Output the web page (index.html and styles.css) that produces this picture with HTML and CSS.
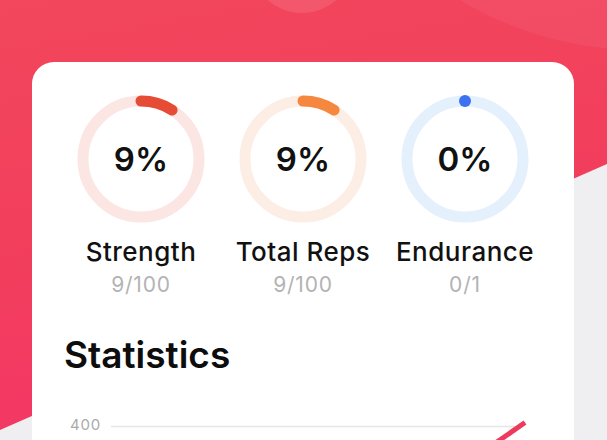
FILE: index.html
```html
<!DOCTYPE html>
<html lang="en">

<head>
    <meta charset="UTF-8">
    <meta name="viewport" content="width=device-width, initial-scale=1.0">
    <title>Progress</title>
    <link rel="stylesheet" href="styles.css">
</head>

<body>
    <div class="backdrop">
        <div class="bubble bubble-small"></div>
        <div class="bubble bubble-big"></div>
    </div>

    <div class="card">
        <div class="rings">
            <div class="ring-item">
                <div class="ring">
                    <svg viewBox="0 0 128 128" width="128" height="128">
                        <circle class="track strength-track" cx="64" cy="64" r="58"></circle>
                        <circle class="arc strength-arc" cx="64" cy="64" r="58" stroke-dasharray="32.8 400"></circle>
                    </svg>
                    <div class="percent">9%</div>
                </div>
                <div class="ring-label">Strength</div>
                <div class="ring-value">9/100</div>
            </div>

            <div class="ring-item">
                <div class="ring">
                    <svg viewBox="0 0 128 128" width="128" height="128">
                        <circle class="track reps-track" cx="64" cy="64" r="58"></circle>
                        <circle class="arc reps-arc" cx="64" cy="64" r="58" stroke-dasharray="32.8 400"></circle>
                    </svg>
                    <div class="percent">9%</div>
                </div>
                <div class="ring-label">Total Reps</div>
                <div class="ring-value">9/100</div>
            </div>

            <div class="ring-item">
                <div class="ring">
                    <svg viewBox="0 0 128 128" width="128" height="128">
                        <circle class="track endurance-track" cx="64" cy="64" r="58"></circle>
                        <circle class="arc endurance-arc" cx="64" cy="64" r="58" stroke-dasharray="0 400"></circle>
                    </svg>
                    <div class="percent">0%</div>
                </div>
                <div class="ring-label">Endurance</div>
                <div class="ring-value">0/1</div>
            </div>
        </div>

        <div class="stats">
            <h2 class="section-title">Statistics</h2>

            <div class="chart">
                <span class="axis-label">400</span>
                <svg class="chart-line" viewBox="0 0 420 30" width="420" height="30">
                    <line x1="0" y1="11.5" x2="404" y2="11.5" class="grid"></line>
                    <polyline points="414,7.5 381,30.5" class="series"></polyline>
                </svg>
            </div>
        </div>
    </div>
</body>

</html>
```

FILE: styles.css
```css
body {
    margin: 0;
    height: 440px;
    overflow: hidden;
    font-family: Inter, "Noto Sans", sans-serif;
    background-color: #efeff1;
    position: relative;
}

/* red header shape behind the card */
.backdrop {
    position: absolute;
    top: 0;
    left: 0;
    right: 0;
    height: 440px;
    background: linear-gradient(170deg, #f2475c 0%, #f23f5c 45%, #f5336a 100%);
    clip-path: polygon(0 0, 100% 0, 100% 164px, 0 430px);
    overflow: hidden;
}

.bubble {
    position: absolute;
    border-radius: 50%;
    background: rgba(255, 255, 255, 0.1);
}

.bubble-small {
    width: 104px;
    height: 104px;
    left: 250px;
    top: -91px;
}

.bubble-big {
    width: 700px;
    height: 700px;
    left: 290px;
    top: -650px;
    background: rgba(255, 255, 255, 0.05);
}

.card {
    position: relative;
    margin: 62px 33px 0 32px;
    height: 420px;
    background: #fff;
    border-radius: 22px;
    padding: 33px 28px 0;
    box-sizing: border-box;
}

.rings {
    display: grid;
    grid-template-columns: repeat(3, 1fr);
}

.ring-item {
    display: flex;
    flex-direction: column;
    align-items: center;
}

.ring {
    display: grid;
    place-items: center;
    width: 128px;
    height: 128px;
}

.ring svg,
.ring .percent {
    grid-area: 1 / 1;
}

.ring svg {
    transform: rotate(-90deg);
}

.track,
.arc {
    fill: none;
    stroke-width: 11;
}

.arc {
    stroke-linecap: round;
}

.strength-track {
    stroke: #fbe6e3;
}

.strength-arc {
    stroke: #e64b36;
}

.reps-track {
    stroke: #fdeee5;
}

.reps-arc {
    stroke: #f5883e;
}

.endurance-track {
    stroke: #e5f0fd;
}

.endurance-arc {
    stroke: #3a72f0;
    stroke-width: 12;
}

.percent {
    font-size: 33px;
    font-weight: 600;
    color: #111;
}

.ring-label {
    margin-top: 13px;
    font-size: 26px;
    line-height: 32px;
    font-weight: 500;
    color: #111;
    letter-spacing: 0.5px;
    white-space: nowrap;
}

.ring-value {
    margin-top: 4px;
    font-size: 21px;
    line-height: 26px;
    color: #b3b3b3;
    letter-spacing: 0.8px;
}

.stats {
    padding-left: 4px;
}

.section-title {
    margin: 35px 0 0;
    font-size: 37px;
    line-height: 44px;
    font-weight: 600;
    color: #0d0d0d;
}

.chart {
    display: flex;
    align-items: flex-start;
    gap: 10px;
    margin: 38px 0 0 6px;
}

.axis-label {
    font-size: 15px;
    line-height: 20px;
    color: #aaa;
    letter-spacing: 0.8px;
}

.grid {
    stroke: #e6e6e6;
    stroke-width: 1.5;
}

.series {
    fill: none;
    stroke: #ee3a5c;
    stroke-width: 5;
}
```
